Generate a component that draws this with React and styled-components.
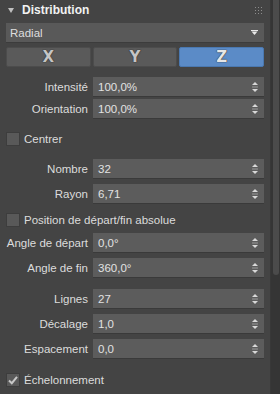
import React from "react";
import styled, { createGlobalStyle } from "styled-components";

const Global = createGlobalStyle`
    *, *::before, *::after {
        box-sizing: border-box;
    }
    html, body {
        margin: 0;
        background: #444444;
    }
    body {
        font-family: "Liberation Sans", Arial, sans-serif;
        font-size: 11.5px;
        color: #dcdcdc;
    }
`;

function Spinner() {
    return (
        <svg width="6" height="10" viewBox="0 0 6 10">
            <polygon points="3,0 6,3 0,3" fill="#d8d8d8" />
            <rect x="0" y="4.5" width="6" height="1" fill="#9a9a9a" />
            <polygon points="0,7 6,7 3,10" fill="#d8d8d8" />
        </svg>
    );
}

function Field({ label, value }) {
    return (
        <Row>
            <Label>{label}</Label>
            <Input>
                <span>{value}</span>
                <Spinner />
            </Input>
        </Row>
    );
}

function Check({ label, checked, top }) {
    return (
        <CheckRow top={top}>
            <Box>
                {checked && (
                    <svg width="12" height="12" viewBox="0 0 12 12">
                        <path d="M2 6.5 L4.8 9.2 L10 2.8" stroke="#c8c8c8" strokeWidth="2" fill="none" />
                    </svg>
                )}
            </Box>
            <span>{label}</span>
        </CheckRow>
    );
}

function App() {
    return (
        <Page>
            <Global />
            <Panel>
                <Header>
                    <svg width="6" height="5" viewBox="0 0 6 5">
                        <polygon points="0,0 6,0 3,5" fill="#c0c0c0" />
                    </svg>
                    <Title>Distribution</Title>
                    <Grip>
                        {Array.from({ length: 9 }).map((_, i) => (
                            <i key={i} />
                        ))}
                    </Grip>
                </Header>
                <Select>
                    <span>Radial</span>
                    <svg width="7" height="5" viewBox="0 0 7 5">
                        <rect x="0" y="0" width="7" height="1" fill="#e8e8e8" />
                        <polygon points="0.5,1.5 6.5,1.5 3.5,5" fill="#e8e8e8" />
                    </svg>
                </Select>
                <Axes>
                    <AxisButton>X</AxisButton>
                    <AxisButton>Y</AxisButton>
                    <AxisButton active>Z</AxisButton>
                </Axes>

                <Group gap={2} top={10}>
                    <Field label="Intensité" value="100,0%" />
                    <Field label="Orientation" value="100,0%" />
                </Group>
                <Check label="Centrer" top={12} />
                <Group gap={5} top={12}>
                    <Field label="Nombre" value="32" />
                    <Field label="Rayon" value="6,71" />
                </Group>
                <Check label="Position de départ/fin absolue" top={8} />
                <Group gap={5} top={5}>
                    <Field label="Angle de départ" value="0,0°" />
                    <Field label="Angle de fin" value="360,0°" />
                </Group>
                <Group gap={5} top={11}>
                    <Field label="Lignes" value="27" />
                    <Field label="Décalage" value="1,0" />
                    <Field label="Espacement" value="0,0" />
                </Group>
                <Check label="Échelonnement" checked top={13} />
            </Panel>
            <Scrollbar>
                <Thumb />
            </Scrollbar>
        </Page>
    );
}

// Style :
const Page = styled.div`
    display: flex;
    width: 280px;
    height: 394px;
    overflow: hidden;
    background: #444444;
`;

const Panel = styled.div`
    width: 270px;
    display: flex;
    flex-direction: column;
`;

const Header = styled.div`
    height: 23px;
    display: flex;
    align-items: center;
    padding: 0 8px 3px;
    gap: 8px;
`;

const Title = styled.div`
    font-weight: bold;
    color: #f2f2f2;
    font-size: 12px;
    flex: 1;
`;

const Grip = styled.div`
    display: grid;
    grid-template-columns: repeat(3, 1px);
    gap: 2px;

    i {
        width: 1px;
        height: 1px;
        background: #8c8c8c;
    }
`;

const Select = styled.div`
    margin: 0 6px;
    height: 20px;
    background: #595959;
    border-bottom: 1px solid #3c3c3c;
    display: flex;
    align-items: center;
    justify-content: space-between;
    padding: 0 6px 0 4px;
    color: #dedede;
`;

const Axes = styled.div`
    display: grid;
    grid-template-columns: repeat(3, 1fr);
    gap: 2px;
    margin: 4px 6px 0;
`;

const AxisButton = styled.div`
    height: 20px;
    display: flex;
    align-items: center;
    justify-content: center;
    font-family: "DejaVu Sans", sans-serif;
    font-weight: bold;
    font-size: 15px;
    border-radius: 2px;
    background: ${(p) => (p.active ? "#5b8bc7" : "#5a5a5a")};
    border: 1px solid ${(p) => (p.active ? "#4a78b0" : "#4c4c4c")};
    color: ${(p) => (p.active ? "#e6e6e6" : "#c4c4c4")};
    text-shadow: 0 0 1px #2a2a2a, 0 0 1px #2a2a2a;
`;

const Group = styled.div`
    display: flex;
    flex-direction: column;
    gap: ${(p) => p.gap}px;
    margin-top: ${(p) => p.top}px;
`;

const Row = styled.div`
    display: grid;
    grid-template-columns: 82px 1fr;
    column-gap: 5px;
    padding: 0 6px;
    align-items: center;
`;

const Label = styled.div`
    text-align: right;
    white-space: nowrap;
    color: #dcdcdc;
`;

const Input = styled.div`
    height: 20px;
    background: #5c5c5c;
    border-bottom: 1px solid #3a3a3a;
    display: flex;
    align-items: center;
    justify-content: space-between;
    padding: 0 6px 0 5px;
    color: #e2e2e2;
`;

const CheckRow = styled.div`
    display: flex;
    align-items: center;
    gap: 4px;
    margin: ${(p) => p.top}px 6px 0;
    height: 16px;
    white-space: nowrap;
`;

const Box = styled.div`
    width: 14px;
    height: 14px;
    background: #595959;
    border: 1px solid #3d3d3d;
    display: flex;
    align-items: center;
    justify-content: center;
`;

const Scrollbar = styled.div`
    width: 10px;
    background: #353535;
    border-left: 1px solid #383838;
    display: flex;
    justify-content: center;
`;

const Thumb = styled.div`
    width: 6px;
    height: 275px;
    background: #4b4b4b;
    border-radius: 0 0 3px 3px;
`;

export default App;
